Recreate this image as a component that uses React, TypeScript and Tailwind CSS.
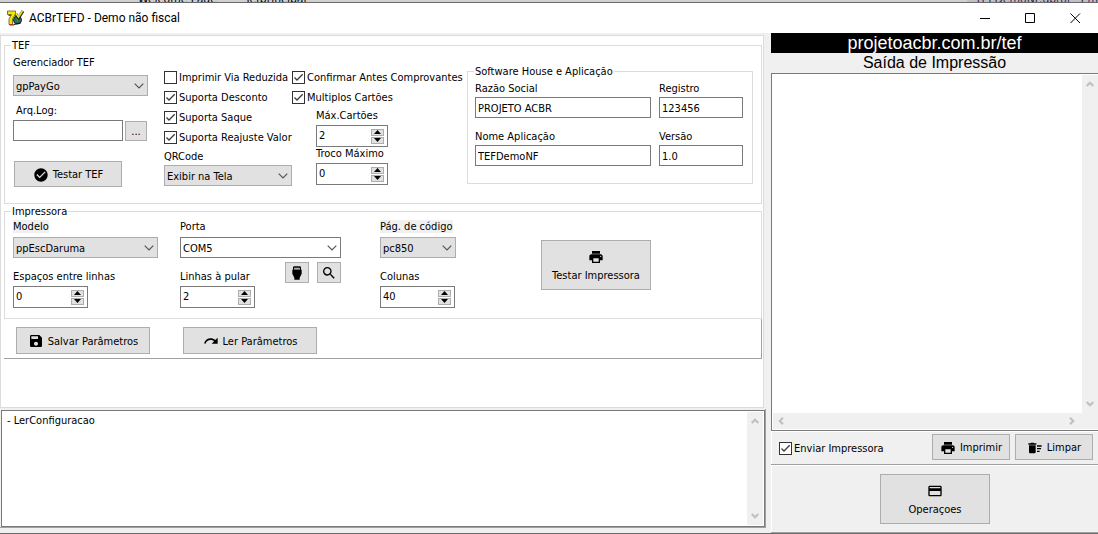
import type { ReactNode } from 'react';
import {
  MdCheckCircle,
  MdCreditCard,
  MdDeleteSweep,
  MdPrint,
  MdRedo,
  MdSave,
  MdSearch,
  MdSettingsInputHdmi,
} from 'react-icons/md';

const Chevron = ({ className = '' }: { className?: string }) => (
  <svg className={className} width="10" height="6" viewBox="0 0 10 6" fill="none" stroke="currentColor" strokeWidth={1.2}>
    <path d="M0.7 0.7L5 5L9.3 0.7" />
  </svg>
);

const Check = ({ label, checked = false }: { label: string; checked?: boolean }) => (
  <label className="flex h-5 items-center gap-0.5 whitespace-nowrap">
    <span className="grid">
      <input
        type="checkbox"
        defaultChecked={checked}
        className="peer col-start-1 row-start-1 size-[13px] appearance-none border border-[#333333] bg-white"
      />
      <svg
        className="pointer-events-none invisible col-start-1 row-start-1 size-[13px] peer-checked:visible"
        viewBox="0 0 13 13"
        fill="none"
        stroke="#3c3c3c"
        strokeWidth={1.3}
      >
        <path d="M2.5 6.5L5 9L10.7 3.3" />
      </svg>
    </span>
    <span className="pt-px">{label}</span>
  </label>
);

interface FieldProps {
  id: string;
  label: string;
  value?: string;
  className?: string;
  labelClass?: string;
}

const TextField = ({ id, label, value = '', className = '' }: FieldProps) => (
  <div className={className}>
    <label htmlFor={id} className="block whitespace-nowrap">
      {label}
    </label>
    <input id={id} defaultValue={value} className="mt-0.5 h-[21px] w-full border border-[#7a7a7a] bg-white px-0.5 pt-px" />
  </div>
);

const SelectField = ({
  id,
  label,
  value = '',
  className = '',
  labelClass = '',
  boxClass = 'border-[#adadad] bg-[#e1e1e1]',
}: FieldProps & { boxClass?: string }) => (
  <div className={className}>
    <label htmlFor={id} className={`block w-fit whitespace-nowrap ${labelClass}`}>
      {label}
    </label>
    <div className="grid items-center">
      <select
        id={id}
        className={`col-start-1 row-start-1 h-[21px] w-full appearance-none border pt-px pr-4 pl-0.5 ${boxClass}`}
      >
        <option>{value}</option>
      </select>
      <Chevron className="pointer-events-none col-start-1 row-start-1 mr-1 justify-self-end text-[#555555]" />
    </div>
  </div>
);

const SpinField = ({ id, label, value, className = '' }: FieldProps) => (
  <div className={className}>
    <label htmlFor={id} className="block whitespace-nowrap">
      {label}
    </label>
    <div className="mt-[3px] flex h-[22px] items-center border border-[#7a7a7a] bg-white pr-[3px]">
      <input id={id} defaultValue={value} className="h-full w-full min-w-0 flex-1 pb-0.5 pl-0.5" />
      <div className="flex flex-col gap-px">
        <button aria-label={`${label} +`} className="flex h-[7px] w-[13px] items-center justify-center border border-[#adadad] bg-[#e1e1e1]">
          <svg width="7" height="4" viewBox="0 0 7 4">
            <path d="M0 4L3.5 0L7 4Z" />
          </svg>
        </button>
        <button aria-label={`${label} -`} className="flex h-[7px] w-[13px] items-center justify-center border border-[#adadad] bg-[#e1e1e1]">
          <svg width="7" height="4" viewBox="0 0 7 4">
            <path d="M0 0L3.5 4L7 0Z" />
          </svg>
        </button>
      </div>
    </div>
  </div>
);

const Button = ({ children, className = '' }: { children: ReactNode; className?: string }) => (
  <button
    className={`flex items-center justify-center gap-1 border border-[#adadad] bg-[#e1e1e1] pt-px whitespace-nowrap ${className}`}
  >
    {children}
  </button>
);

const Group = ({ title, children, className = '' }: { title: string; children: ReactNode; className?: string }) => (
  <fieldset className={`border border-[#dcdcdc] ${className}`}>
    <legend className="ml-1.5 px-px">{title}</legend>
    {children}
  </fieldset>
);

const ScrollArrow = ({ className = '' }: { className?: string }) => (
  <svg className={className} width="8" height="6" viewBox="0 0 8 6" fill="none" stroke="#bfbfbf" strokeWidth={2}>
    <path d="M0.7 5L4 1.7L7.3 5" />
  </svg>
);

const VerticalScroll = () => (
  <div className="flex w-4 flex-col items-center justify-between bg-[#f0f0f0] py-1.5">
    <ScrollArrow />
    <ScrollArrow className="rotate-180" />
  </div>
);

const AppIcon = () => (
  <svg width="17" height="16" viewBox="0 0 17 16">
    <path d="M0.5 1H8.5V4L5.5 9V14.5H2V9L4.5 4.5H0.5Z" fill="#f4e800" stroke="#4a4500" strokeWidth={0.7} />
    <path d="M1.5 5.5H4M2.5 14.8H7" stroke="#c01818" strokeWidth={1.2} />
    <circle cx="10.5" cy="10" r="4" fill="#2b6d5b" stroke="#1c2a30" strokeWidth={1} />
    <path d="M9 8.5L12 9L11 12Z" fill="#3fb34a" />
    <path d="M9 4L11.5 8L16 1" fill="none" stroke="#222222" strokeWidth={3} />
    <path d="M9 3.5L11.5 7L15.5 1" fill="none" stroke="#f4e800" strokeWidth={1.6} />
    <path d="M7 14.5L13.5 13" stroke="#111111" strokeWidth={1.2} />
  </svg>
);

const TitleBar = () => (
  <header className="flex h-[30px] items-center bg-white pl-[7px]">
    <AppIcon />
    <h1 className="ml-[5px] flex-1 font-['Roboto',sans-serif] text-xs">ACBrTEFD - Demo não fiscal</h1>
    <button aria-label="Minimizar" className="flex w-[45px] justify-center">
      <svg width="11" height="11" viewBox="0 0 11 11" stroke="#000">
        <path d="M0 5.5H10" />
      </svg>
    </button>
    <button aria-label="Maximizar" className="flex w-[45px] justify-center">
      <svg width="11" height="11" viewBox="0 0 11 11" fill="none" stroke="#000">
        <path d="M0.5 0.5H9.5V9.5H0.5Z" />
      </svg>
    </button>
    <button aria-label="Fechar" className="flex w-[45px] justify-center">
      <svg width="11" height="11" viewBox="0 0 11 11" stroke="#000">
        <path d="M0.5 0.5L10 10M10 0.5L0.5 10" />
      </svg>
    </button>
  </header>
);

const TefGroup = () => (
  <Group title="TEF">
    <div className="flex items-start pr-2 pb-4 pl-2">
      <div className="w-[151px] pt-1">
        <SelectField id="gerenciador" label="Gerenciador TEF" value="gpPayGo" className="w-[135px]" labelClass="mb-1.5" />
        <label htmlFor="arqlog" className="mt-2 ml-[3px] block">
          Arq.Log:
        </label>
        <div className="mt-[3px] flex items-center gap-0.5">
          <input id="arqlog" className="h-[21px] w-[110px] border border-[#7a7a7a] bg-white px-0.5" />
          <Button className="h-5 w-[22px]">...</Button>
        </div>
        <Button className="mt-5 ml-px h-[26px] w-[108px]">
          <MdCheckCircle size={16} />
          Testar TEF
        </Button>
      </div>

      <div className="w-[128px] pt-[15px]">
        <Check label="Imprimir Via Reduzida" />
        <Check label="Suporta Desconto" checked />
        <Check label="Suporta Saque" checked />
        <Check label="Suporta Reajuste Valor" checked />
        <SelectField id="qrcode" label="QRCode" value="Exibir na Tela" className="mt-[3px]" labelClass="mb-0.5" />
      </div>

      <div className="w-[175px] pt-[15px]">
        <Check label="Confirmar Antes Comprovantes" checked />
        <Check label="Multiplos Cartões" checked />
        <SpinField id="maxcartoes" label="Máx.Cartões" value="2" className="mt-0.5 ml-6 w-[72px]" />
        <SpinField id="troco" label="Troco Máximo" value="0" className="ml-6 w-[72px]" />
      </div>

      <div className="max-w-[286px] flex-1 pt-[13px]">
        <Group title="Software House e Aplicação">
          <div className="grid grid-cols-[176px_84px] gap-x-2 gap-y-3 pt-1 pr-2 pb-[17px] pl-[7px]">
            <TextField id="razao" label="Razão Social" value="PROJETO ACBR" />
            <TextField id="registro" label="Registro" value="123456" />
            <TextField id="nomeapp" label="Nome Aplicação" value="TEFDemoNF" />
            <TextField id="versao" label="Versão" value="1.0" />
          </div>
        </Group>
      </div>
    </div>
  </Group>
);

const ImpressoraGroup = () => (
  <Group title="Impressora" className="mt-px">
    <div className="flex items-start pt-0.5 pb-2.5 pl-2">
      <div className="w-[167px]">
        <SelectField id="modelo" label="Modelo" value="ppEscDaruma" className="w-[145px]" labelClass="mb-1 bg-[#f0f0f0]" />
        <SpinField id="espacos" label="Espaços entre linhas" value="0" className="mt-3 w-[75px]" />
      </div>

      <div className="w-[200px]">
        <SelectField
          id="porta"
          label="Porta"
          value="COM5"
          className="w-[161px]"
          labelClass="mb-1"
          boxClass="border-[#7a7a7a] bg-white"
        />
        <div className="flex w-[161px] items-start">
          <SpinField id="linhas" label="Linhas à pular" value="2" className="mt-3 w-[75px]" />
          <div className="mt-1 ml-auto flex gap-2">
            <button aria-label="Configurar porta" className="flex h-[21px] w-6 items-center justify-center border border-[#adadad] bg-[#e1e1e1]">
              <MdSettingsInputHdmi size={16} />
            </button>
            <button aria-label="Procurar porta" className="flex h-[21px] w-6 items-center justify-center border border-[#adadad] bg-[#e1e1e1]">
              <MdSearch size={16} />
            </button>
          </div>
        </div>
      </div>

      <div className="w-[161px]">
        <SelectField id="pagina" label="Pág. de código" value="pc850" className="w-[76px]" labelClass="mb-1 bg-[#f0f0f0]" />
        <SpinField id="colunas" label="Colunas" value="40" className="mt-3 w-[75px]" />
      </div>

      <Button className="mt-5 h-[50px] w-[110px] flex-col">
        <MdPrint size={16} />
        Testar Impressora
      </Button>
    </div>
  </Group>
);

const ConfigPanel = () => (
  <section className="flex flex-col border border-[#dcdcdc] bg-white pt-[3px] pr-px pb-12 pl-[3px]">
    <TefGroup />
    <ImpressoraGroup />
    <div className="flex gap-[33px] border-r border-b border-[#a0a0a0] pt-2 pb-1 pl-3">
      <Button className="h-[27px] w-[134px]">
        <MdSave size={16} />
        Salvar Parâmetros
      </Button>
      <Button className="h-[27px] w-[134px]">
        <MdRedo size={16} />
        Ler Parâmetros
      </Button>
    </div>
  </section>
);

const PrintPanel = () => (
  <aside className="flex w-[327px] flex-col">
    <a href="#tef" className="block bg-black text-center font-['Liberation_Sans',sans-serif] text-lg leading-5 text-white">
      projetoacbr.com.br/tef
    </a>
    <label htmlFor="saida" className="block text-center font-['Liberation_Sans',sans-serif] text-base leading-5">
      Saída de Impressão
    </label>
    <div className="flex flex-1 flex-col border-y border-l border-[#7a7a7a] bg-white pt-px pb-px pl-px">
      <div className="flex flex-1">
        <textarea id="saida" className="flex-1 resize-none overflow-hidden bg-white px-1" />
        <VerticalScroll />
      </div>
      <div className="flex h-4 items-center justify-between bg-[#f0f0f0] pr-[22px] pl-1">
        <ScrollArrow className="-rotate-90" />
        <ScrollArrow className="rotate-90" />
      </div>
    </div>
    <div className="flex items-center border-t border-l border-white py-0.5 pr-[5px] pl-[7px]">
      <Check label="Enviar Impressora" checked />
      <div className="ml-auto flex gap-[5px] pb-0.5">
        <Button className="h-[26px] w-[78px]">
          <MdPrint size={16} />
          Imprimir
        </Button>
        <Button className="h-[26px] w-[78px]">
          <MdDeleteSweep size={16} />
          Limpar
        </Button>
      </div>
    </div>
    <div className="border-y border-[#a0a0a0]">
      <div className="flex justify-center border-t border-l border-white pt-2 pb-2">
        <Button className="h-[50px] w-[110px] flex-col">
          <MdCreditCard size={16} />
          Operaçoes
        </Button>
      </div>
    </div>
  </aside>
);

export default function App() {
  return (
    <div className="flex min-h-screen flex-col border-b border-[#6b6b6b] bg-[#f0f0f0] font-['DejaVu_Sans_Condensed','Noto_Sans',sans-serif] text-[11px] leading-[13px] text-black">
      {/* Edge of the window behind */}
      <div className="flex h-[3px] items-end overflow-hidden border-b border-[#6b6b6b] bg-[#d0d0d0] text-xs leading-3 whitespace-nowrap">
        <span className="-mb-[3px] ml-[138px]">Welcome Page</span>
        <span className="-mb-[3px] ml-7">Tefprincipal</span>
        <span className="-mb-[3px] ml-auto bg-[#c0c0c0] pl-2 text-[#3a1a5a]">TEFDemoNF.dproj - Em</span>
      </div>
      <TitleBar />
      <main className="flex flex-1">
        <div className="flex min-w-0 flex-1 flex-col pt-0.5 pr-[5px]">
          <div className="pr-0.5">
            <ConfigPanel />
          </div>
          <div className="mt-px mb-[5px] flex flex-1 border-r border-b border-[#a0a0a0] pt-px pl-px">
            <div className="flex flex-1 border border-[#7a7a7a] bg-white p-px">
              <textarea
                aria-label="Log"
                defaultValue="- LerConfiguracao"
                className="flex-1 resize-none overflow-hidden bg-white px-1 py-0.5"
              />
              <VerticalScroll />
            </div>
          </div>
        </div>
        <PrintPanel />
      </main>
    </div>
  );
}
